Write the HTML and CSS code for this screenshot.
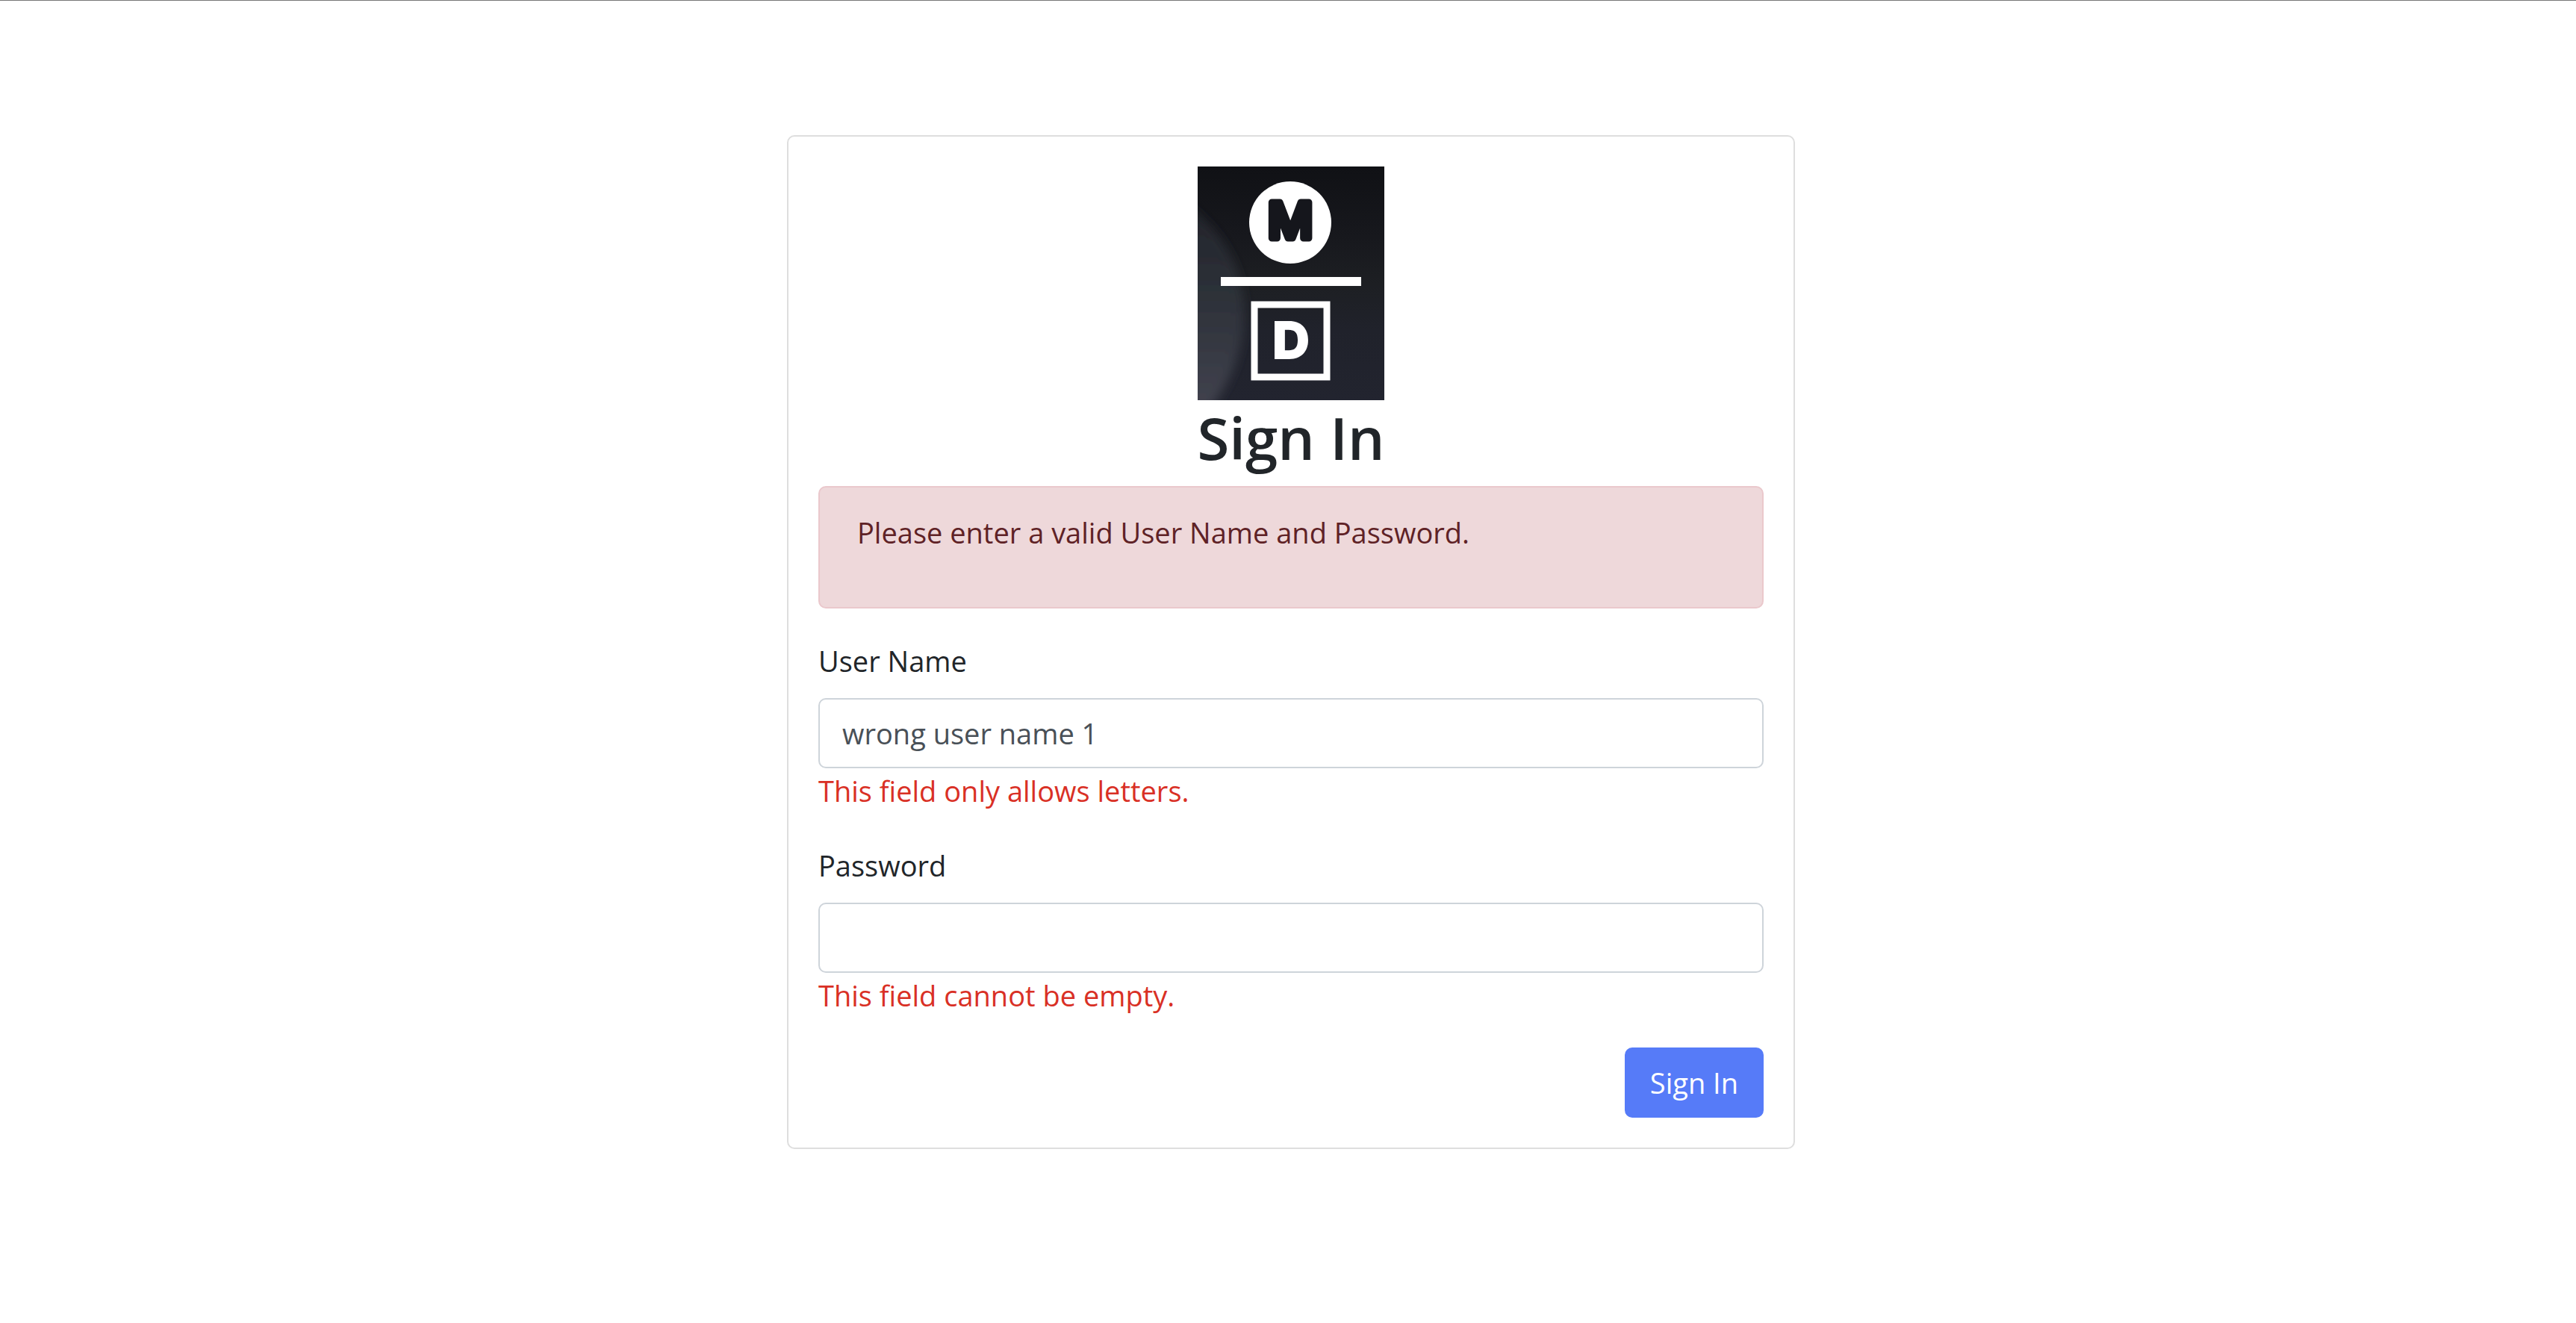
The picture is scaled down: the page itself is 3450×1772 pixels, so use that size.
FILE: index.html
```html
<!DOCTYPE html>
<html lang="en">
<head>
<meta charset="utf-8">
<meta name="viewport" content="width=device-width, initial-scale=1">
<title>Sign In</title>
<link rel="stylesheet" href="styles.css">
</head>
<body>
<main class="page">
  <form class="card" novalidate>
    <header class="brand">
      <svg class="logo" viewBox="0 0 250 313" role="img" aria-label="M D">
        <defs>
          <linearGradient id="night" x1="0" y1="0" x2="0" y2="1">
            <stop offset="0" stop-color="#101115"/>
            <stop offset="0.3" stop-color="#17181d"/>
            <stop offset="0.5" stop-color="#1d1f23"/>
            <stop offset="0.7" stop-color="#20222b"/>
            <stop offset="1" stop-color="#22242f"/>
          </linearGradient>
          <linearGradient id="glow" x1="0" y1="0" x2="0" y2="1">
            <stop offset="0" stop-color="#212329"/>
            <stop offset="0.5" stop-color="#2e323a"/>
            <stop offset="1" stop-color="#42434f"/>
          </linearGradient>
          <filter id="soft" x="-30%" y="-30%" width="160%" height="160%">
            <feGaussianBlur stdDeviation="7"/>
          </filter>
        </defs>
        <rect width="250" height="313" fill="url(#night)"/>
        <path d="M-30 40C20 70 62 125 62 195C62 245 45 290 12 330H-30Z" fill="url(#glow)" filter="url(#soft)"/>
        <circle cx="124" cy="75" r="55" fill="#fff"/>
        <text class="logo-m" x="124" y="96" text-anchor="middle">M</text>
        <rect x="31" y="148" width="188" height="12" fill="#fff"/>
        <rect x="76" y="185" width="97" height="97" fill="none" stroke="#fff" stroke-width="9"/>
        <text class="logo-d" x="125" y="258" text-anchor="middle">D</text>
      </svg>
      <h1 class="title">Sign In</h1>
    </header>
    <div class="alert" role="alert">Please enter a valid User Name and Password.</div>
    <div class="field">
      <label class="label" for="username">User Name</label>
      <input class="input" id="username" type="text" value="wrong user name 1" aria-describedby="username-error">
      <p class="error" id="username-error">This field only allows letters.</p>
    </div>
    <div class="field">
      <label class="label" for="password">Password</label>
      <input class="input" id="password" type="password" aria-describedby="password-error">
      <p class="error" id="password-error">This field cannot be empty.</p>
    </div>
    <button class="submit" type="submit">Sign In</button>
  </form>
</main>
</body>
</html>
```
FILE: styles.css
```css
*, *::before, *::after { box-sizing: border-box; }

body {
  margin: 0;
  border-top: 1px solid #777;
  background: #fff;
  color: #212529;
  font: 400 38px/60px "Open Sans", "Noto Sans", sans-serif;
}

.page {
  display: flex;
  justify-content: center;
  padding: 180px 0 180px 8px;
}

.card {
  display: flex;
  flex-direction: column;
  width: 100%;
  max-width: 1350px;
  padding: 40px;
  border: 2px solid #dedede;
  border-radius: 10px;
}

.brand {
  display: flex;
  flex-direction: column;
  align-items: center;
  margin-bottom: 15px;
}

.logo { display: block; width: 250px; height: 313px; }

.logo-m {
  font: 500 66px "Inter", sans-serif;
  fill: #15161c;
  stroke: #15161c;
  stroke-width: 9px;
  stroke-linejoin: round;
}

.logo-d { font: 900 70px "Inter", sans-serif; fill: #fff; }

.title { margin: 0; font-size: 78px; line-height: 100px; font-weight: 600; }

.alert {
  margin-bottom: 40px;
  padding: 30px 50px 70px;
  border: 2px solid #eac8cc;
  border-radius: 10px;
  background: #eed8da;
  color: #5f2226;
}

.field { display: flex; flex-direction: column; margin-bottom: 40px; }

.label { margin-bottom: 20px; }

.input {
  width: 100%;
  height: 94px;
  padding: 15px 30px;
  border: 2px solid #ced4da;
  border-radius: 10px;
  background: #fff;
  color: #495057;
  font: inherit;
}

.error { margin: 0; color: #d93025; }

.submit {
  align-self: flex-end;
  padding: 15px 32px;
  border: 2px solid #567bf8;
  border-radius: 10px;
  background: #567bf8;
  color: #fff;
  font: inherit;
}
```
